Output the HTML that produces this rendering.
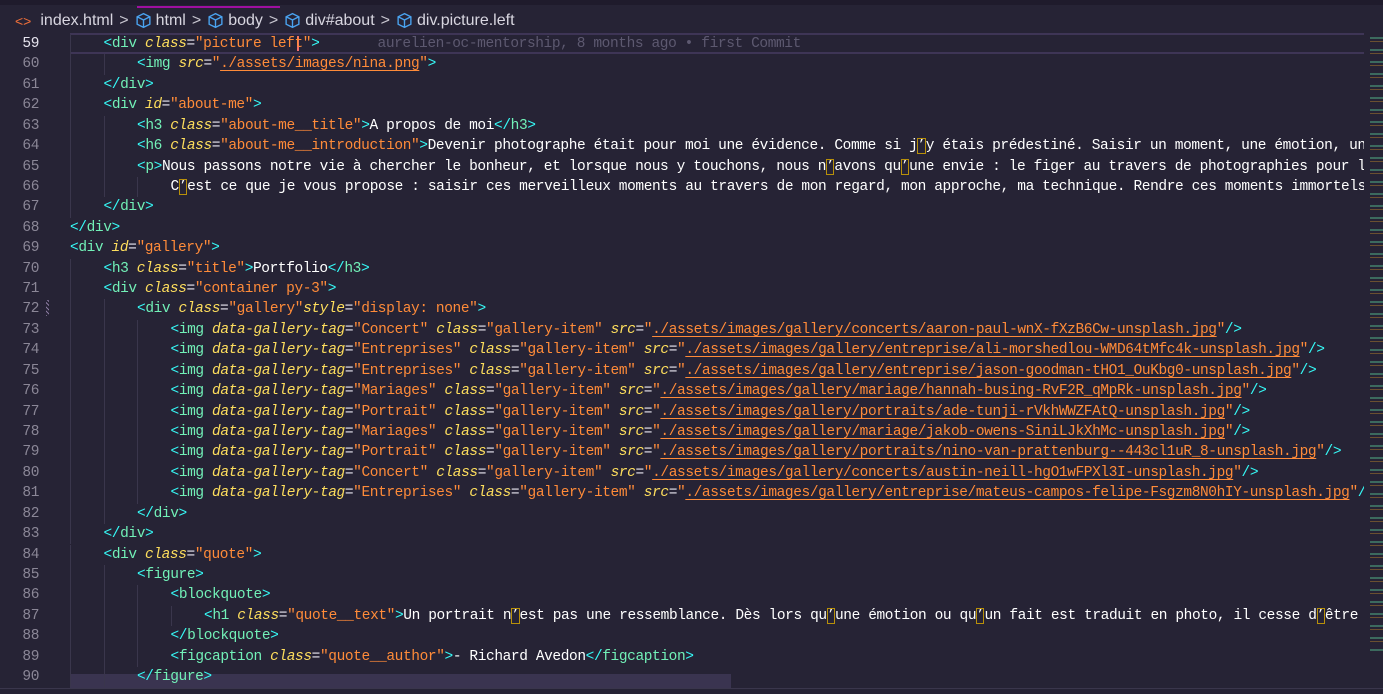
<!DOCTYPE html>
<html><head><meta charset="utf-8"><style>
*{margin:0;padding:0;box-sizing:border-box}
body{width:1383px;height:694px;background:#262335;overflow:hidden;position:relative;font-family:"Liberation Mono",monospace}
.top{position:absolute;left:0;top:0;width:1383px;height:5px;background:#1f1b2c}
.pl{position:absolute;left:137px;top:6px;width:143px;height:2px;background:#a00fa0}
.bc{position:absolute;left:0;top:8px;height:25px;font-family:"Liberation Sans",sans-serif;font-size:16px;color:#d8d6e0;white-space:nowrap;display:flex;align-items:center}
.bc .sep{color:#c8c6d0;margin:0 6px 0 6px}
.bc svg{margin-right:4px}
.ln{position:absolute;left:0;text-align:right;font-size:14.5px;color:#8b8797;height:20.4px;line-height:20.4px;letter-spacing:-0.4px}
.ln.cur{color:#e6e4ee}
.code{position:absolute;left:70px;top:34px;width:1294px;height:654px;overflow:hidden}
.row{position:absolute;left:0;height:20.4px;line-height:20.4px;font-size:14.5px;letter-spacing:-0.4px;white-space:pre;color:#ffffff}
.g{position:absolute;width:1px;background:#3a364c}
.t{color:#72f1b8}.p{color:#36f9f6}.a{color:#fede5d;font-style:italic}.s{color:#ff8b39}.e{color:#e8e6f0}
.u{text-decoration:underline;text-decoration-color:#ff8b39;text-underline-offset:3px}
.q{outline:1px solid #b8900a;outline-offset:-1px}
.blame{color:#5d5970}
</style></head><body>
<div class="top"></div><div class="pl"></div>
<div class="bc">
<span style="color:#f0703a;margin-left:15px;margin-right:9px;font-size:14px">&lt;&gt;</span>
<span>index.html</span><span class="sep">&gt;</span>
<svg width="17" height="17" viewBox="0 0 16 16"><path d="M8 1.5 L14 4.5 V11.5 L8 14.5 L2 11.5 V4.5 Z M2 4.5 L8 7.5 L14 4.5 M8 7.5 V14.5" fill="none" stroke="#4aa3f0" stroke-width="1.3"/></svg><span>html</span><span class="sep">&gt;</span>
<svg width="17" height="17" viewBox="0 0 16 16"><path d="M8 1.5 L14 4.5 V11.5 L8 14.5 L2 11.5 V4.5 Z M2 4.5 L8 7.5 L14 4.5 M8 7.5 V14.5" fill="none" stroke="#4aa3f0" stroke-width="1.3"/></svg><span>body</span><span class="sep">&gt;</span>
<svg width="17" height="17" viewBox="0 0 16 16"><path d="M8 1.5 L14 4.5 V11.5 L8 14.5 L2 11.5 V4.5 Z M2 4.5 L8 7.5 L14 4.5 M8 7.5 V14.5" fill="none" stroke="#4aa3f0" stroke-width="1.3"/></svg><span>div#about</span><span class="sep">&gt;</span>
<svg width="17" height="17" viewBox="0 0 16 16"><path d="M8 1.5 L14 4.5 V11.5 L8 14.5 L2 11.5 V4.5 Z M2 4.5 L8 7.5 L14 4.5 M8 7.5 V14.5" fill="none" stroke="#4aa3f0" stroke-width="1.3"/></svg><span>div.picture.left</span>
</div>
<div style="position:absolute;left:70px;top:33px;width:1294px;height:21px;border-top:2px solid #3e3556;border-bottom:2px solid #3e3556"></div>
<div style="position:absolute;left:70px;top:674px;width:661px;height:14px;background:#3a3450"></div>
<div style="position:absolute;left:0;top:688px;width:1383px;height:1px;background:#3a364c"></div>
<div style="position:absolute;left:297px;top:36px;width:2px;height:15px;background:#f07070"></div>
<div style="position:absolute;left:46px;top:300px;width:3px;height:16px;background:repeating-linear-gradient(45deg,#8a7aa0 0 1px,transparent 1px 3px)"></div>
<div id="nums"></div>
<div class="code" id="code"></div>
<div style="position:absolute;left:1370px;top:33px;width:13px;height:620px;background:repeating-linear-gradient(180deg,transparent 0 4px,#3c6a5e 4px 6px,transparent 6px 8px,#6a5030 8px 9px,transparent 9px 12px)"></div>
<script>
var L=[
[59,1,'<span class="p">&lt;</span><span class="t">div</span> <span class="a">class</span><span class="e">=</span><span class="s">"picture left"</span><span class="p">&gt;</span>       <span class="blame">aurelien-oc-mentorship, 8 months ago • first Commit</span>'],
[60,2,'<span class="p">&lt;</span><span class="t">img</span> <span class="a">src</span><span class="e">=</span><span class="s">"<span class="u">./assets/images/nina.png</span>"</span><span class="p">&gt;</span>'],
[61,1,'<span class="p">&lt;/</span><span class="t">div</span><span class="p">&gt;</span>'],
[62,1,'<span class="p">&lt;</span><span class="t">div</span> <span class="a">id</span><span class="e">=</span><span class="s">"about-me"</span><span class="p">&gt;</span>'],
[63,2,'<span class="p">&lt;</span><span class="t">h3</span> <span class="a">class</span><span class="e">=</span><span class="s">"about-me__title"</span><span class="p">&gt;</span>A propos de moi<span class="p">&lt;/</span><span class="t">h3</span><span class="p">&gt;</span>'],
[64,2,'<span class="p">&lt;</span><span class="t">h6</span> <span class="a">class</span><span class="e">=</span><span class="s">"about-me__introduction"</span><span class="p">&gt;</span>Devenir photographe était pour moi une évidence. Comme si j<span class="q">’</span>y étais prédestiné. Saisir un moment, une émotion, un instant'],
[65,2,'<span class="p">&lt;</span><span class="t">p</span><span class="p">&gt;</span>Nous passons notre vie à chercher le bonheur, et lorsque nous y touchons, nous n<span class="q">’</span>avons qu<span class="q">’</span>une envie : le figer au travers de photographies pour le'],
[66,3,'C<span class="q">’</span>est ce que je vous propose : saisir ces merveilleux moments au travers de mon regard, mon approche, ma technique. Rendre ces moments immortels.'],
[67,1,'<span class="p">&lt;/</span><span class="t">div</span><span class="p">&gt;</span>'],
[68,0,'<span class="p">&lt;/</span><span class="t">div</span><span class="p">&gt;</span>'],
[69,0,'<span class="p">&lt;</span><span class="t">div</span> <span class="a">id</span><span class="e">=</span><span class="s">"gallery"</span><span class="p">&gt;</span>'],
[70,1,'<span class="p">&lt;</span><span class="t">h3</span> <span class="a">class</span><span class="e">=</span><span class="s">"title"</span><span class="p">&gt;</span>Portfolio<span class="p">&lt;/</span><span class="t">h3</span><span class="p">&gt;</span>'],
[71,1,'<span class="p">&lt;</span><span class="t">div</span> <span class="a">class</span><span class="e">=</span><span class="s">"container py-3"</span><span class="p">&gt;</span>'],
[72,2,'<span class="p">&lt;</span><span class="t">div</span> <span class="a">class</span><span class="e">=</span><span class="s">"gallery"</span><span class="a">style</span><span class="e">=</span><span class="s">"display: none"</span><span class="p">&gt;</span>']
];
var imgs=[["Concert","concerts/aaron-paul-wnX-fXzB6Cw-unsplash.jpg"],["Entreprises","entreprise/ali-morshedlou-WMD64tMfc4k-unsplash.jpg"],["Entreprises","entreprise/jason-goodman-tHO1_OuKbg0-unsplash.jpg"],["Mariages","mariage/hannah-busing-RvF2R_qMpRk-unsplash.jpg"],["Portrait","portraits/ade-tunji-rVkhWWZFAtQ-unsplash.jpg"],["Mariages","mariage/jakob-owens-SiniLJkXhMc-unsplash.jpg"],["Portrait","portraits/nino-van-prattenburg--443cl1uR_8-unsplash.jpg"],["Concert","concerts/austin-neill-hgO1wFPXl3I-unsplash.jpg"],["Entreprises","entreprise/mateus-campos-felipe-Fsgzm8N0hIY-unsplash.jpg"]];
imgs.forEach(function(m,i){L.push([73+i,3,'<span class="p">&lt;</span><span class="t">img</span> <span class="a">data-gallery-tag</span><span class="e">=</span><span class="s">"'+m[0]+'"</span> <span class="a">class</span><span class="e">=</span><span class="s">"gallery-item"</span> <span class="a">src</span><span class="e">=</span><span class="s">"<span class="u">./assets/images/gallery/'+m[1]+'</span>"</span><span class="p">/&gt;</span>']);});
L=L.concat([
[82,2,'<span class="p">&lt;/</span><span class="t">div</span><span class="p">&gt;</span>'],
[83,1,'<span class="p">&lt;/</span><span class="t">div</span><span class="p">&gt;</span>'],
[84,1,'<span class="p">&lt;</span><span class="t">div</span> <span class="a">class</span><span class="e">=</span><span class="s">"quote"</span><span class="p">&gt;</span>'],
[85,2,'<span class="p">&lt;</span><span class="t">figure</span><span class="p">&gt;</span>'],
[86,3,'<span class="p">&lt;</span><span class="t">blockquote</span><span class="p">&gt;</span>'],
[87,4,'<span class="p">&lt;</span><span class="t">h1</span> <span class="a">class</span><span class="e">=</span><span class="s">"quote__text"</span><span class="p">&gt;</span>Un portrait n<span class="q">’</span>est pas une ressemblance. Dès lors qu<span class="q">’</span>une émotion ou qu<span class="q">’</span>un fait est traduit en photo, il cesse d<span class="q">’</span>être un fait'],
[88,3,'<span class="p">&lt;/</span><span class="t">blockquote</span><span class="p">&gt;</span>'],
[89,3,'<span class="p">&lt;</span><span class="t">figcaption</span> <span class="a">class</span><span class="e">=</span><span class="s">"quote__author"</span><span class="p">&gt;</span>- Richard Avedon<span class="p">&lt;/</span><span class="t">figcaption</span><span class="p">&gt;</span>'],
[90,2,'<span class="p">&lt;/</span><span class="t">figure</span><span class="p">&gt;</span>']
]);
var code=document.getElementById('code'),nums=document.getElementById('nums'),h='',n='';
L.forEach(function(r,i){var top=i*20.42;
 for(var k=0;k<r[1];k++){h+='<div class="g" style="left:'+(k*33.5)+'px;top:'+top+'px;height:20.42px"></div>';}
 h+='<div class="row" style="top:'+top+'px;left:'+(r[1]*33.5)+'px">'+r[2]+'</div>';
 n+='<div class="ln'+(r[0]==59?' cur':'')+'" style="top:'+(34+top)+'px;width:39px">'+r[0]+'</div>';});
code.innerHTML=h;nums.innerHTML=n;
</script>
</body></html>
